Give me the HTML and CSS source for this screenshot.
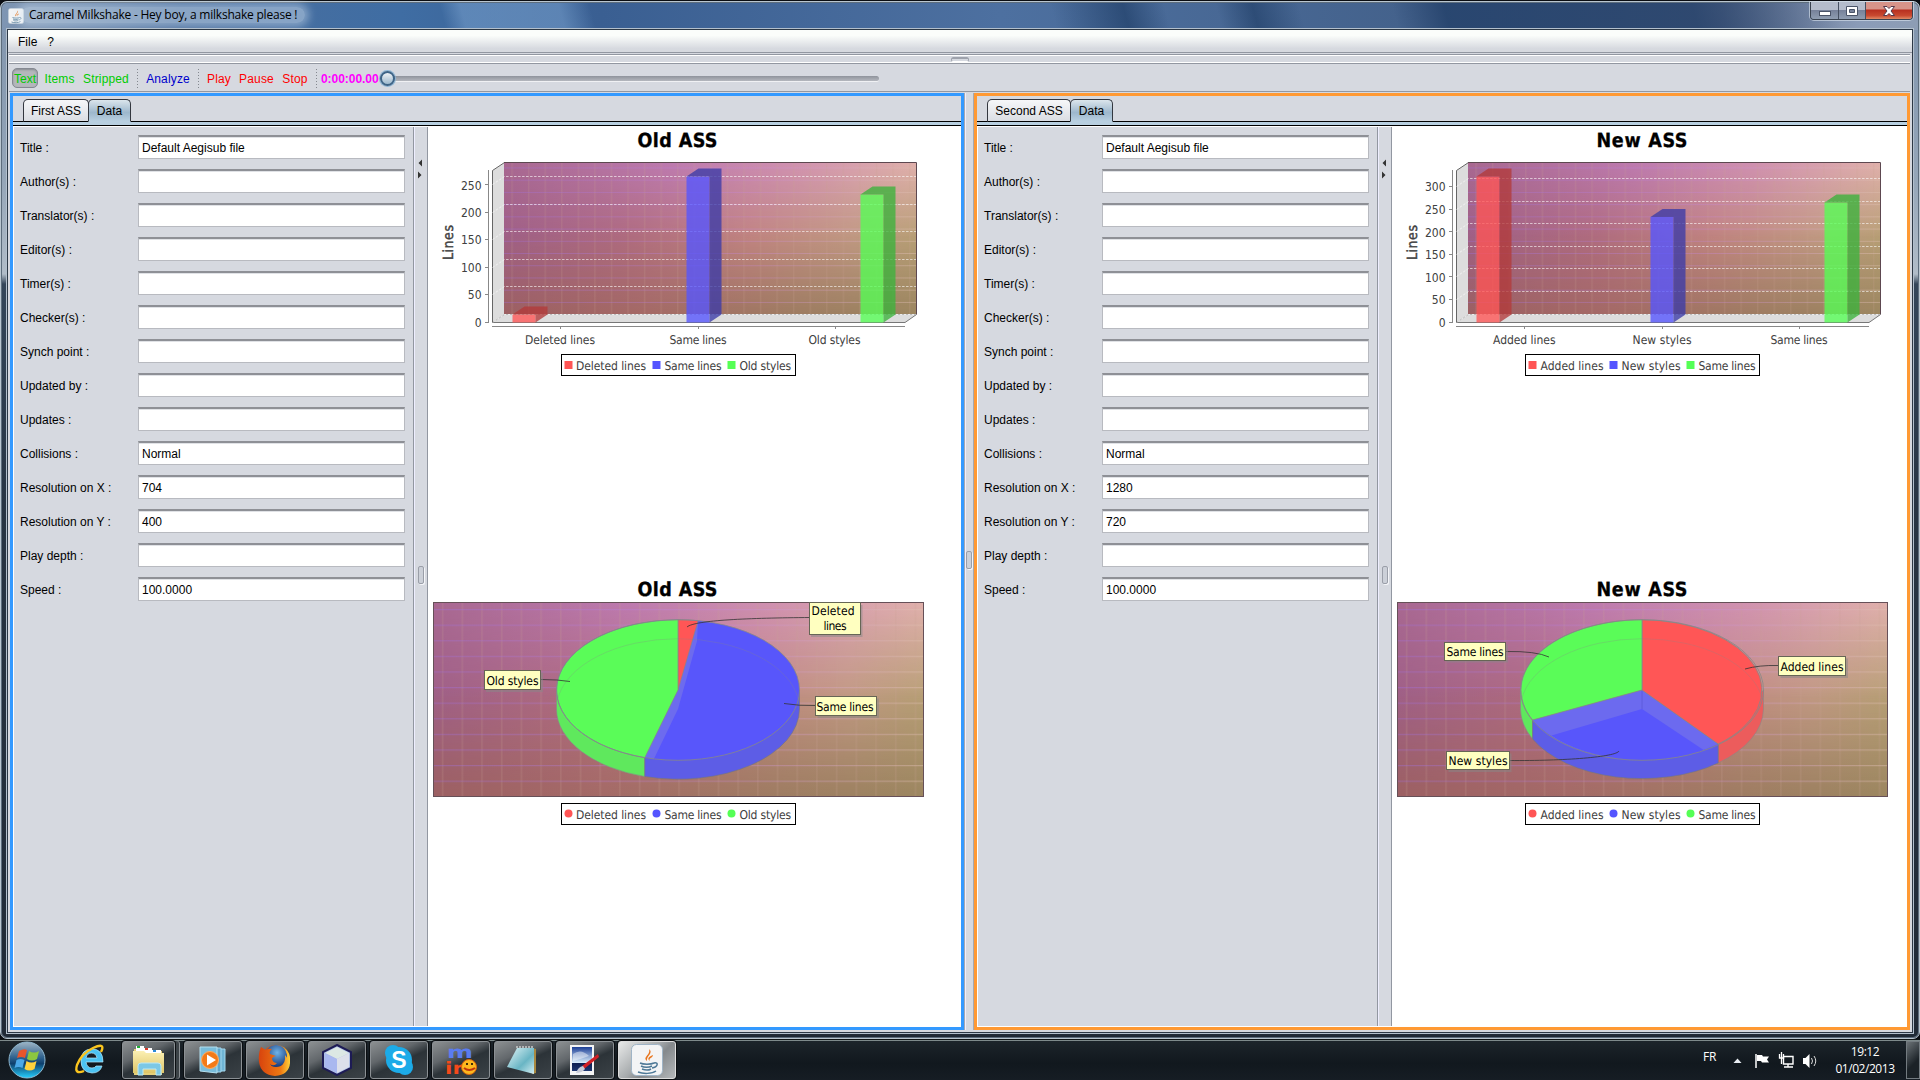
FILE: index.html
```html
<!DOCTYPE html>
<html lang="en">
<head>
<meta charset="utf-8">
<title>Caramel Milkshake - Hey boy, a milkshake please !</title>
<link rel="stylesheet" href="styles.css">
</head>
<body>
<svg class="defs" width="0" height="0">
  <defs>
    <linearGradient id="gTop"><stop offset="0" stop-color="#a86890"/><stop offset=".4" stop-color="#bd7aaf"/><stop offset=".7" stop-color="#d091b0"/><stop offset="1" stop-color="#e0b0ac"/></linearGradient>
    <linearGradient id="gMid"><stop offset="0" stop-color="#a06088"/><stop offset=".3" stop-color="#b06c80"/><stop offset=".6" stop-color="#c28582"/><stop offset=".85" stop-color="#c29a84"/><stop offset="1" stop-color="#b8a076"/></linearGradient>
    <linearGradient id="gBot"><stop offset="0" stop-color="#9c6062"/><stop offset=".35" stop-color="#a46a66"/><stop offset=".7" stop-color="#9e7c62"/><stop offset="1" stop-color="#9c8660"/></linearGradient>
    <linearGradient id="fTop" x2="0" y2="1"><stop offset="0" stop-color="#fff"/><stop offset=".5" stop-color="#000"/></linearGradient>
    <linearGradient id="fBot" x2="0" y2="1"><stop offset=".45" stop-color="#000"/><stop offset="1" stop-color="#fff"/></linearGradient>
    <linearGradient id="gH"><stop offset="0" stop-color="#a070dc" stop-opacity=".38"/><stop offset=".6" stop-color="#c88adc" stop-opacity=".35"/><stop offset="1" stop-color="#e0c0b0" stop-opacity=".45"/></linearGradient>
    <mask id="mTop"><rect width="490" height="194" fill="url(#fTop)"/></mask>
    <mask id="mBot"><rect width="490" height="194" fill="url(#fBot)"/></mask>
    <pattern id="pV" width="19.7" height="194" patternUnits="userSpaceOnUse" x="8.8"><rect width="1.6" height="194" fill="#c8a090" opacity=".2"/></pattern>
    <pattern id="pH" width="490" height="15.6" patternUnits="userSpaceOnUse" y="7"><rect width="490" height="1.2" fill="url(#gH)"/></pattern>
    <symbol id="wall" viewBox="0 0 490 194" preserveAspectRatio="none">
      <rect width="490" height="194" fill="url(#gMid)"/>
      <rect width="490" height="194" fill="url(#gTop)" mask="url(#mTop)"/>
      <rect width="490" height="194" fill="url(#gBot)" mask="url(#mBot)"/>
      <rect width="490" height="194" fill="url(#pV)"/>
      <rect width="490" height="194" fill="url(#pH)"/>
    </symbol>
    <g id="box3d">
      <path d="M492.5 170.5L504.5 162.5V314.5L492.5 322.5Z" fill="#ddd"/>
      <path d="M492.5 322.5L504.5 314.5H916.5L905 322.5Z" fill="#ddd"/>
      <use href="#wall" x="504" y="162" width="412" height="152"/>
      <path d="M492.5 322.5V170.5L504.5 162.5" fill="none" stroke="#666"/>
      <path d="M504 162.5H916.5V314.5" fill="none" stroke="#5d4850"/>
      <path d="M916.5 314.5L905 322.5H492" fill="none" stroke="#777"/>
      <path d="M492.5 322.5L504.5 314.5H916" fill="none" stroke="#bbb" stroke-dasharray="2 2"/>
      <path d="M488.5 170V323M492 326.5H905M560.5 327V329M698.5 327V329M835.5 327V329" fill="none" stroke="#888"/>
    </g>
    <g id="java">
      <rect x=".5" y=".5" width="31" height="31" rx="5" fill="#f3f4f5" stroke="#9fb4c6"/>
      <path d="M16 17c-5-4 4-6 2-12 5 4-3 7-2 12M19 17c-2-3 3-3 3-6-5 2-6 4-3 6" fill="#e8761f"/>
      <path d="M9 19c3 1.5 11 1.500 14 0M10 22c3 1.500 8 1.500 11 0M11 25c3 1.200 7 1.200 9 0M7 28c5 2 14 2 18-1M23 19c5-1 4 4-2 5" fill="none" stroke="#4d7896" stroke-width="1.500"/>
    </g>
    <g id="arrows"><path d="M422 159.500V166.500L418.500 163ZM418 171.500V178.500L421.500 175Z" fill="#333"/></g>
    <linearGradient id="orb" x2="0" y2="1"><stop offset="0" stop-color="#9eb4c4"/><stop offset=".45" stop-color="#2b5f8c"/><stop offset=".6" stop-color="#0d3f6d"/><stop offset="1" stop-color="#25d0ff"/></linearGradient>
    <linearGradient id="fold" x2="0" y2="1"><stop offset="0" stop-color="#fbf0b4"/><stop offset="1" stop-color="#dfc567"/></linearGradient>
    <linearGradient id="sky" x2="0" y2="1"><stop offset="0" stop-color="#1c3f96"/><stop offset=".65" stop-color="#d8ecfa"/><stop offset=".66" stop-color="#0d1e50"/><stop offset="1" stop-color="#1d3670"/></linearGradient>
    <linearGradient id="pad" x2="1" y2="1"><stop offset="0" stop-color="#e4f6f8"/><stop offset=".6" stop-color="#69b5c4"/><stop offset="1" stop-color="#d4eef2"/></linearGradient>
    <radialGradient id="fox" cx=".55" cy=".35" r=".7"><stop offset="0" stop-color="#6fb4e8"/><stop offset="1" stop-color="#102d70"/></radialGradient>
    <linearGradient id="flame"><stop offset="0" stop-color="#d8430e"/><stop offset=".7" stop-color="#ee7a12"/><stop offset="1" stop-color="#ffd23c"/></linearGradient>
  </defs>
</svg>

<div class="screen">
  <main class="window">
    <header class="titlebar">
      <svg class="app-icon" viewBox="0 0 32 32"><use href="#java"/></svg>
      <span class="caption">Caramel Milkshake - Hey boy, a milkshake please !</span>
      <div class="controls">
        <span class="ctl"><svg width="14" height="14"><rect x="1.500" y="7.500" width="11" height="4" fill="#fff" stroke="#4a5468"/></svg></span>
        <span class="ctl mid"><svg width="14" height="14"><path d="M1.500 2.500h11v9h-11zM4.500 5.500v3h5v-3z" fill="#fff" fill-rule="evenodd" stroke="#4a5468"/></svg></span>
        <span class="ctl close"><svg width="14" height="14"><path d="M1.500 2.500h3.500l2 2 2-2h3.500l-3.500 4.500 3.500 4.500h-3.500l-2-2-2 2h-3.500l3.500-4.500z" fill="#fff" stroke="#54384a"/></svg></span>
      </div>
    </header>
    <section class="client">
      <nav class="menubar"><span>File</span><span>?</span></nav>
      <div class="strip"><i></i></div>
      <div class="toolbar">
        <span class="tool on green" style="width:26px">Text</span>
        <span class="tool green" style="width:43px">Items</span>
        <span class="tool green" style="width:50px">Stripped</span>
        <i class="sep"></i>
        <span class="tool navy" style="width:60px">Analyze</span>
        <i class="sep"></i>
        <span class="tool red" style="width:40px">Play</span>
        <span class="tool red" style="width:35px">Pause</span>
        <span class="tool red" style="width:42px">Stop</span>
        <i class="sep"></i>
        <span class="time">0:00:00.00</span>
        <div class="slider"><i></i></div>
      </div>
      <div class="workspace">
        <article class="panel first">
          <div class="tabs"><span class="tab" style="width:66px">First ASS</span><span class="tab active" style="width:43px">Data</span></div>
          <div class="content">
            <form class="fields">
              <label>Title :<b>Default Aegisub file</b></label>
              <label>Author(s) :<b></b></label>
              <label>Translator(s) :<b></b></label>
              <label>Editor(s) :<b></b></label>
              <label>Timer(s) :<b></b></label>
              <label>Checker(s) :<b></b></label>
              <label>Synch point :<b></b></label>
              <label>Updated by :<b></b></label>
              <label>Updates :<b></b></label>
              <label>Collisions :<b>Normal</b></label>
              <label>Resolution on X :<b>704</b></label>
              <label>Resolution on Y :<b>400</b></label>
              <label>Play depth :<b></b></label>
              <label>Speed :<b>100.0000</b></label>
            </form>
            <div class="divider"><svg width="13" height="60" viewBox="414 127 13 60"><use href="#arrows"/></svg><i class="grip"></i></div>
            <svg class="charts" width="533" height="899" viewBox="428 127 533 899">
              <text class="title" x="637.500" y="147" textLength="80">Old ASS</text>
              <use href="#box3d"/>
              <path class="gridline" d="M492.500 184.500L504.500 176.500H916M492.500 212.500L504.500 204.500H916M492.500 239.500L504.500 231.500H916M492.500 267.500L504.500 259.500H916M492.500 294.500L504.500 286.500H916"/>
              <path class="axis" d="M485 184.500h3M485 212.500h3M485 239.500h3M485 267.500h3M485 294.500h3M485 322.500h3"/>
              <g class="tick"><text x="481.500" y="190">250</text><text x="481.500" y="217">200</text><text x="481.500" y="244">150</text><text x="481.500" y="272">100</text><text x="481.500" y="299">50</text><text x="481.500" y="327">0</text></g>
              <text class="ylabel" transform="translate(453 260) rotate(-90)" textLength="35">Lines</text>
              <g class="bar r"><rect x="512.500" y="314.500" width="23" height="8"/><path d="M512.500 314.500l12-8h23l-12 8zM535.500 314.500l12-8v8l-12 8z"/></g>
              <g class="bar b"><rect x="686.500" y="176.500" width="23" height="146"/><path d="M686.500 176.500l12-8h23l-12 8zM709.500 176.500l12-8v146l-12 8z"/></g>
              <g class="bar g"><rect x="860.500" y="194.500" width="23" height="128"/><path d="M860.500 194.500l12-8h23l-12 8zM883.500 194.500l12-8v128l-12 8z"/></g>
              <g class="txt"><text x="525" y="344" textLength="70">Deleted lines</text><text x="669.500" y="344" textLength="57">Same lines</text><text x="808.500" y="344" textLength="52">Old styles</text></g>
              <g class="txt">
                <rect class="frame" x="561.500" y="354.500" width="234" height="21"/>
                <rect class="fr" x="564.500" y="361" width="8" height="8"/><text x="576" y="370" textLength="70">Deleted lines</text>
                <rect class="fb" x="652.500" y="361" width="8" height="8"/><text x="664.500" y="370" textLength="57">Same lines</text>
                <rect class="fg" x="727.500" y="361" width="8" height="8"/><text x="739.500" y="370" textLength="51.500">Old styles</text>
              </g>

              <text class="title" x="637.500" y="596" textLength="80">Old ASS</text>
              <use href="#wall" x="433" y="602" width="490" height="194"/>
              <rect class="plot" x="433.500" y="602.500" width="490" height="194"/>
              <path d="M556.500 690V709A121.500 70.300 0 0 0 644.800 776.500V757Z" fill="#5fe85d" stroke="#888" stroke-width=".6"/>
              <path d="M799.500 690V709A121.500 70.300 0 0 1 644.800 776.500V757Z" fill="#5d5de6" stroke="#777" stroke-width=".6"/>
              <ellipse cx="678" cy="690" rx="121.500" ry="70.300" fill="#5856fb"/>
              <path d="M698.100 620.700L678 690L644.800 757.300L654 758.800L678 709L697 641Z" fill="#6d6bee"/>
              <path d="M678 690V619.700A121.500 70.300 0 0 1 698.100 620.700Z" fill="#ff5656" stroke="#888" stroke-width=".7"/>
              <path d="M678 690V619.700A121.500 70.300 0 0 0 644.800 757.600Z" fill="#5afc58" stroke="#888" stroke-width=".7"/>
              <ellipse cx="678" cy="690" rx="121.500" ry="70.300" fill="none" stroke="#888" stroke-width=".8"/>
              <path d="M557.500 700A121.500 70.300 0 0 1 798.500 700" fill="none" stroke="#888" stroke-width=".6" opacity=".45"/>
              <path class="link" d="M810 617.500C750 618 695 620 687 627M541 679.500Q558 679.500 570 681.500M815 705.500Q800 706 784 703.500"/>
              <g class="tag"><path class="shade" d="M811 605h51.500v32h-51.500zM486 672.500h57v19.500h-57zM817.500 698.500h61.500v19.500h-61.500z"/><rect x="809.500" y="602.500" width="51" height="32"/><rect x="484.500" y="670.500" width="56" height="19"/><rect x="815.500" y="696.500" width="61" height="19"/>
              <text x="811.500" y="615" textLength="43">Deleted</text><text x="823.500" y="630" textLength="23">lines</text><text x="486.500" y="685" textLength="52">Old styles</text><text x="816.500" y="711" textLength="57">Same lines</text></g>
              <g class="txt">
                <rect class="frame" x="561.500" y="803.500" width="234" height="21"/>
                <circle class="fr" cx="568.500" cy="813.500" r="4"/><text x="576" y="819" textLength="70">Deleted lines</text>
                <circle class="fb" cx="656.500" cy="813.500" r="4"/><text x="664.500" y="819" textLength="57">Same lines</text>
                <circle class="fg" cx="731.500" cy="813.500" r="4"/><text x="739.500" y="819" textLength="51.500">Old styles</text>
              </g>
            </svg>
          </div>
        </article>
        <div class="splitter"><i class="grip"></i></div>
        <article class="panel second">
          <div class="tabs"><span class="tab" style="width:84px">Second ASS</span><span class="tab active" style="width:43px">Data</span></div>
          <div class="content">
            <form class="fields">
              <label>Title :<b>Default Aegisub file</b></label>
              <label>Author(s) :<b></b></label>
              <label>Translator(s) :<b></b></label>
              <label>Editor(s) :<b></b></label>
              <label>Timer(s) :<b></b></label>
              <label>Checker(s) :<b></b></label>
              <label>Synch point :<b></b></label>
              <label>Updated by :<b></b></label>
              <label>Updates :<b></b></label>
              <label>Collisions :<b>Normal</b></label>
              <label>Resolution on X :<b>1280</b></label>
              <label>Resolution on Y :<b>720</b></label>
              <label>Play depth :<b></b></label>
              <label>Speed :<b>100.0000</b></label>
            </form>
            <div class="divider"><svg width="13" height="60" viewBox="414 127 13 60"><use href="#arrows"/></svg><i class="grip"></i></div>
            <svg class="charts" width="515" height="899" viewBox="428 127 515 899">
              <text class="title" x="632.500" y="147" textLength="91">New ASS</text>
              <use href="#box3d"/>
              <path class="gridline" d="M492.500 186.500L504.500 178.500H916M492.500 209.500L504.500 201.500H916M492.500 231.500L504.500 223.500H916M492.500 254.500L504.500 246.500H916M492.500 276.500L504.500 268.500H916M492.500 299.500L504.500 291.500H916"/>
              <path class="axis" d="M485 186.500h3M485 209.500h3M485 231.500h3M485 254.500h3M485 276.500h3M485 299.500h3M485 322.500h3"/>
              <g class="tick"><text x="481.500" y="191">300</text><text x="481.500" y="214">250</text><text x="481.500" y="237">200</text><text x="481.500" y="259">150</text><text x="481.500" y="282">100</text><text x="481.500" y="304">50</text><text x="481.500" y="327">0</text></g>
              <text class="ylabel" transform="translate(453 260) rotate(-90)" textLength="35">Lines</text>
              <g class="bar r"><rect x="512.500" y="176.500" width="23" height="146"/><path d="M512.500 176.500l12-8h23l-12 8zM535.500 176.500l12-8v146l-12 8z"/></g>
              <g class="bar b"><rect x="686.500" y="217" width="23" height="105.500"/><path d="M686.500 217l12-8h23l-12 8zM709.500 217l12-8v105.500l-12 8z"/></g>
              <g class="bar g"><rect x="860.500" y="202.500" width="23" height="120"/><path d="M860.500 202.500l12-8h23l-12 8zM883.500 202.500l12-8v120l-12 8z"/></g>
              <g class="txt"><text x="529" y="344" textLength="62.500">Added lines</text><text x="668.500" y="344" textLength="59">New styles</text><text x="806.500" y="344" textLength="57">Same lines</text></g>
              <g class="txt">
                <rect class="frame" x="561.500" y="354.500" width="234" height="21"/>
                <rect class="fr" x="564.500" y="361" width="8" height="8"/><text x="576.500" y="370" textLength="63">Added lines</text>
                <rect class="fb" x="645.500" y="361" width="8" height="8"/><text x="657.500" y="370" textLength="59">New styles</text>
                <rect class="fg" x="722.500" y="361" width="8" height="8"/><text x="734.500" y="370" textLength="57">Same lines</text>
              </g>

              <text class="title" x="632.500" y="596" textLength="91">New ASS</text>
              <use href="#wall" x="433" y="602" width="490" height="194"/>
              <rect class="plot" x="433.500" y="602.500" width="490" height="194"/>
              <path d="M556.500 690V709A121.500 70.300 0 0 0 568.600 739V719Z" fill="#5fe85d" stroke="#888" stroke-width=".6"/>
              <path d="M799.500 690V709A121.500 70.300 0 0 1 754.200 763V744Z" fill="#ec5c5c" stroke="#888" stroke-width=".6"/>
              <path d="M568.600 720L678 690L754.200 744V763A121.500 70.300 0 0 1 568.600 739Z" fill="#5d5de6" stroke="#777" stroke-width=".6"/>
              <path d="M568.600 720L678 690L754.200 744A121.500 70.300 0 0 1 568.600 720Z" fill="#6c6aef"/>
              <path d="M678 709L740.400 750.500A121.500 70.300 0 0 1 587.500 735.500Z" fill="#5856fb"/>
              <path d="M678 690V709" stroke="#5a58d8" stroke-width=".8"/>
              <path d="M678 690V619.700A121.500 70.300 0 0 1 754.200 744Z" fill="#ff5656" stroke="#888" stroke-width=".8"/>
              <path d="M678 690V619.700A121.500 70.300 0 0 0 568.600 720Z" fill="#5afc58" stroke="#888" stroke-width=".8"/>
              <ellipse cx="678" cy="690" rx="121.500" ry="70.300" fill="none" stroke="#888" stroke-width=".8"/>
              <path d="M557.500 700A121.500 70.300 0 0 1 798.500 700" fill="none" stroke="#888" stroke-width=".6" opacity=".45"/>
              <path class="link" d="M542 651.500Q572 651 585 657M814 665.500Q795 665 781 669M545 760.500C600 761 652 757 655 751"/>
              <g class="tag"><path class="shade" d="M482.500 644.500h61.500v18h-61.500zM816.500 658.500h67.500v19.500h-67.500zM484.500 753.500h63v18.500h-63z"/><rect x="480.500" y="642.500" width="61" height="18"/><rect x="814.500" y="656.500" width="67" height="19"/><rect x="482.500" y="751.500" width="63" height="18"/>
              <text x="482.500" y="656" textLength="57">Same lines</text><text x="816.500" y="671" textLength="63">Added lines</text><text x="484.500" y="765" textLength="59">New styles</text></g>
              <g class="txt">
                <rect class="frame" x="561.500" y="803.500" width="234" height="21"/>
                <circle class="fr" cx="568.500" cy="813.500" r="4"/><text x="576.500" y="819" textLength="63">Added lines</text>
                <circle class="fb" cx="649.500" cy="813.500" r="4"/><text x="657.500" y="819" textLength="59">New styles</text>
                <circle class="fg" cx="726.500" cy="813.500" r="4"/><text x="734.500" y="819" textLength="57">Same lines</text>
              </g>
            </svg>
          </div>
        </article>
      </div>
    </section>
  </main>

  <footer class="taskbar">
    <svg class="orb" width="38" height="38"><circle cx="19" cy="19" r="18" fill="url(#orb)" stroke="#8db7cf"/><path d="M11 10q5-3 8-1l-2 8q-4-2-8 0z" fill="#e8552b"/><path d="M21 10q5 3 10 0l-2 8q-5 3-10 0z" fill="#8cc63f"/><path d="M8.500 19q4-2 8 0l-2 8q-4-2-8 0z" fill="#4aa8e8"/><path d="M18.500 20q5 3 10 0l-2 8q-5 3-10 0z" fill="#ffd23c"/></svg>
    <svg class="ie" width="32" height="32"><path d="M29 19H12q1 6 6 6 3 0 4-2h6q-2 7-10 7-11-1-11-12Q7 6 18 6q11 0 11 13M12 15h11q-1-5-5.500-5t-5.500 5" fill="#4cc3f2" stroke="#b5eaff" stroke-width=".7"/><path d="M27 9Q32-1 19 5 7 11 3 22q-3 10 7 6" fill="none" stroke="#fbc51e" stroke-width="2.400"/></svg>
    <span class="task stacked" style="width:53px"><svg width="34" height="32"><path d="M2 5h8l2 2h18V31H2z" fill="#e5cf79"/><path d="M4 2h8v6H4zM12 4h8v5h-8zM20 6h9v4h-9z" fill="#fff"/><path d="M5 2h3v2H5z" fill="#1fae35"/><path d="M13 4h3v2h-3z" fill="#d8382a"/><path d="M21 6h3v2h-3z" fill="#2b8ad8"/><path d="M1 7h11l2 2h18V29H1z" fill="url(#fold)"/><path d="M6 31V22q0-3 3-3h17q3 0 3 3v9h-5v-6H11v6z" fill="#7cc8e6" stroke="#bce8f5"/></svg></span>
    <span class="task"><svg width="34" height="32"><path d="M20 5h9v22h-9z" fill="#6fb4d4" stroke="#a4d8ee"/><path d="M17 4h8v24h-8z" fill="#5fa7cc" stroke="#a4d8ee"/><path d="M4 3h17v26L4 27z" fill="#79bddb" stroke="#b5e0f0"/><circle cx="14" cy="16" r="8.500" fill="#f27a18" stroke="#ffae62"/><path d="M11 10.500l9 5.500-9 5.500z" fill="#fff"/></svg></span>
    <span class="task"><svg width="34" height="32"><circle cx="18" cy="15" r="14" fill="url(#flame)"/><circle cx="18" cy="12" r="11" fill="url(#fox)"/><path d="M3 3q3 2 5 3 3-2 6-1-3 2-2 5l6 2q-4 1-4 3 1 4 5 4-3 4-7 1 4 6 10 3 6-4 5-12 2 2 3 5 0-6-3-10 6 5 5 13-1 12-15 13Q3 31 1 18 0 10 3 3" fill="url(#flame)"/></svg></span>
    <span class="task"><svg width="34" height="32"><path d="M17 1l14 7v16l-14 7-14-7V8z" fill="#aebfe4" stroke="#1d1b55" stroke-width="2"/><path d="M17 3l12 6-12 6L5 9z" fill="#dce8e4"/><path d="M5 9l12 6v14L5 23z" fill="#a9b8ef"/><path d="M29 9l-12 6v14l12-6z" fill="#dce0ea"/></svg></span>
    <span class="task"><svg width="34" height="32"><circle cx="17" cy="16" r="13" fill="#1cabe8"/><circle cx="11" cy="9" r="8" fill="#1cabe8"/><circle cx="23" cy="23" r="8" fill="#1cabe8"/><text x="17" y="24" text-anchor="middle" class="skype">S</text></svg></span>
    <span class="task"><svg class="mirc-logo" width="34" height="32"><text x="3" y="14" class="mirc m" textLength="26" lengthAdjust="spacingAndGlyphs">m</text><text x="1" y="30" class="mirc ir" textLength="18" lengthAdjust="spacingAndGlyphs">ir</text><circle cx="25" cy="23" r="7.500" fill="#fdb81e" stroke="#d8650c"/><path d="M20 24q5 4 11 0" stroke="#c0340c" stroke-width="2" fill="none"/><circle cx="23" cy="20" r="1"/><circle cx="28" cy="20" r="1"/></svg></span>
    <span class="task"><svg width="34" height="32"><path d="M26 4l4 1v24l-4 1z" fill="#a8883f"/><path d="M11 4h17v26L1 23z" fill="url(#pad)"/><path d="M11 4v-2M14 4v-2M17 4v-2M20 4v-2M23 4v-2M26 4v-2" stroke="#ccc" stroke-width="1.500"/></svg></span>
    <span class="task"><svg width="34" height="32"><path d="M2 1h24v30H2z" fill="#f4f4f4"/><path d="M4 3h20v24H4z" fill="url(#sky)"/><path d="M5 10q8-6 16 2-8 3-16 5z" fill="#fff" opacity=".45"/><path d="M30 10L14 22l2 3 15-12z" fill="#d11f24"/><path d="M15 22q-5 1-7 7 6 0 9-4z" fill="#c7cbd8"/></svg></span>
    <span class="task current"><svg width="32" height="32"><use href="#java"/></svg></span>
    <div class="tray">
      <span class="lang">FR</span>
      <svg width="90" height="20" viewBox="1730 1051 90 20"><path d="M1733.500 1063L1737.500 1058.500L1741.500 1063Z" fill="#e8edf2"/><path d="M1756 1054v14" stroke="#fff" stroke-width="1.500"/><path d="M1757 1055h5l1 1.500h6l-2 3 2 3h-7l-1-1.500h-4z" fill="#fff"/><path d="M1783.500 1056.500h9.500v7.500h-9.500zM1788 1064v3M1784 1067h9" fill="none" stroke="#fff" stroke-width="1.400"/><path d="M1779.500 1054v4h4v-4M1781.500 1052v12" stroke="#fff" stroke-width="1.300" fill="none"/><path d="M1803 1058h2.500l4-4v14l-4-4h-2.500z" fill="#fff"/><path d="M1811.500 1058q2 3 0 6M1814 1056q3.500 5 0 10" stroke="#ddd" fill="none"/></svg>
      <div class="clock"><span>19:12</span><span>01/02/2013</span></div>
      <i class="peek"></i>
    </div>
  </footer>
</div>
</body>
</html>
```
FILE: styles.css
```css
* { box-sizing: border-box; }
body { margin: 0; background: #0a0d12; font: 12px/14px "Liberation Sans", Arial, sans-serif; color: #000; }
i { font-style: normal; display: block; }
b { font-weight: normal; }
.defs { position: absolute; }
.screen { width: 1920px; height: 1080px; display: flex; flex-direction: column; overflow: hidden; padding-top: 1px; }

.window {
  height: 1038px; flex: none; border-radius: 7px; border: 1px solid #b9c6d0;
  box-shadow: inset 0 0 0 1px #5d6d7d;
  padding: 0 6px 5px 6px; display: flex; flex-direction: column;
  background:
    linear-gradient(75deg, transparent 0 1020px, rgba(20,50,90,.55) 1090px, transparent 1130px 1180px, rgba(20,50,90,.5) 1215px, transparent 1260px 1350px, rgba(28,58,100,.7) 1400px 1640px, transparent 1780px) 0 0 / 100% 28px no-repeat,
    linear-gradient(75deg, transparent 0 430px, rgba(120,160,205,.55) 450px 545px, transparent 575px) 0 0 / 100% 28px no-repeat,
    linear-gradient(90deg, #7f96b3 0, #4b6f9e 180px, #3f6da3 400px, #3a5f92 600px, #4d70a0 1000px, #44628c 1400px, #5c6c8c 1720px, #8b9cb8 1860px, #8d9db4) 0 0 / 100% 28px no-repeat,
    linear-gradient(180deg, #8296ae 29px, #95a6b8 180px, #b0bcc8 272px, #34465a 282px, #283544 500px, #202a36 1030px);
}
.titlebar { height: 27px; flex: none; display: flex; align-items: flex-start; padding-left: 1px; }
.app-icon { width: 16px; height: 16px; margin: 6px 5px 0 0; }
.caption { font: 12px/16px "Open Sans", "Noto Sans", sans-serif; margin-top: 5px; white-space: nowrap; letter-spacing: -.22px; padding: 0 8px; margin-left: -8px; background: rgba(215,230,245,.45); border-radius: 9px; box-shadow: 0 0 8px 4px rgba(215,230,245,.45); }
.controls { margin-left: auto; display: flex; height: 18px; width: 103px; border: 1px solid #39424f; border-top: 0; border-radius: 0 0 4px 4px; box-shadow: 0 0 0 1px rgba(220,230,240,.6); overflow: hidden; }
.ctl { width: 28px; display: flex; justify-content: center; align-items: center; border-right: 1px solid #465061; background: linear-gradient(#b4bccb 0 45%, #77829a 50%, #8f9db1); }
.ctl.mid { width: 27px; }
.ctl.close { flex: 1; border: 0; background: linear-gradient(#d79489 0 40%, #b83020 48%, #c94a30 80%, #e08a66); }

.client { flex: 1; border: 1px solid #2c3845; box-shadow: 0 0 0 1px #b3c0cd; background: #d6d9e0; display: flex; flex-direction: column; min-height: 0; }
.menubar { height: 23px; flex: none; background: linear-gradient(#fbfdfb 25%, #d6d9df 85%); border-bottom: 1px solid #9297a1; padding: 5px 10px; display: flex; gap: 10px; }
.strip { height: 10px; flex: none; margin: 1px 2px 0 1px; border: solid #9297a1; border-width: 1px 0; box-shadow: inset 0 1px #fff, inset 0 -1px #fff; }
.strip i { width: 18px; height: 5px; margin: 2px auto 0; border: 1px solid #9ea2ac; border-top-width: 2px; border-bottom-color: #fff; border-radius: 3px; }
.toolbar { height: 28px; flex: none; margin: 0 2px 0 1px; border-bottom: 1px solid #9297a1; display: flex; align-items: center; padding: 1px 0 0 3px; }
.tool { height: 20px; line-height: 22px; text-align: center; white-space: nowrap; letter-spacing: .15px; }
.tool.on { border: 1px solid #858992; border-radius: 5px; background: #b4b7bc; box-shadow: inset 0 1px 2px #888b92; line-height: 20px; letter-spacing: 0; }
.green { color: #0c0; } .navy { color: #00c; } .red { color: #f00; }
.tool.green:nth-child(3) { margin-right: 6px; }
.sep { width: 1px; height: 19px; background: repeating-linear-gradient(#84888f 0 1px, transparent 1px 3px); }
.time { color: #f0f; font-weight: bold; width: 57px; margin-left: 4px; letter-spacing: -.05px; line-height: 20px; height: 19px; }
.slider { width: 499px; height: 5px; border-radius: 3px; background: linear-gradient(#8f939c, #b4b7be); box-shadow: 0 1px #f0f1f4; margin: 0 0 0 2px; display: flex; align-items: center; }
.slider i { width: 15px; height: 15px; flex: none; border-radius: 50%; border: 2px solid #3d6487; background: linear-gradient(#f0f3f6, #9cb8cd); box-shadow: 0 0 0 1px #8db5d5; }

.workspace { flex: 1; display: flex; padding: 1px 1px 0 1px; min-height: 0; }
.panel { display: flex; flex-direction: column; border: 3px solid; height: 937px; }
.first { width: 954px; border-color: #39f; margin-left: 1px; }
.second { width: 936px; border-color: #f93; }
.splitter { width: 10px; height: 937px; padding-bottom: 4px; border: solid #a4a8b2; border-width: 0 1px; box-shadow: inset 1px 0 #eef; display: flex; align-items: center; justify-content: center; }
.grip { width: 6px; height: 18px; border: 1px solid #9a9ea8; border-radius: 2px; background: #ccd0d8; box-shadow: 1px 1px #f4f5f8; }
.tabs { height: 26px; flex: none; display: flex; align-items: flex-end; padding: 0 0 0 10px; border-bottom: 1px solid #000; box-shadow: 0 3px #b8cfe0, 0 4px #000; position: relative; z-index: 1; }
.tab { height: 23px; margin-bottom: -1px; border: 1px solid #33373f; border-bottom-color: #000; border-radius: 5px 5px 0 0; text-align: center; line-height: 22px; background: linear-gradient(#f6f7f9, #dadde3); white-space: nowrap; }
.tab + .tab { margin-left: -1px; }
.tab.active { background: linear-gradient(#dbe5ec, #9db7cc 60%, #b8cfe0); border-bottom-color: #b8cfe0; }
.content { flex: 1; margin-top: 4px; display: flex; border: solid #fff; border-width: 1px 0 1px 1px; overflow: hidden; }
.fields { width: 399px; flex: none; padding: 8px 8px 0 6px; display: flex; flex-direction: column; gap: 10px; }
.fields label { height: 24px; display: flex; justify-content: space-between; line-height: 26px; white-space: nowrap; }
.fields b { width: 267px; background: #fff; border: 1px solid #b8bac0; border-top: 2px solid #8e9096; padding-left: 3px; line-height: 22px; box-shadow: inset 0 1px #e0e2e6; }
.divider { width: 15px; flex: none; border: solid #9297a1; border-width: 0 1px; box-shadow: inset 1px 0 #eef; }
.divider svg { display: block; }
.divider .grip { margin: 379px auto 0; }
.charts { background: #fff; flex: 1 0 auto; display: block; }

.charts text { font-family: "DejaVu Sans Condensed", "DejaVu Sans", sans-serif; font-stretch: condensed; font-size: 12px; }
text[textLength] { text-rendering: geometricPrecision; }
.charts .title { font-weight: bold; font-size: 19.5px; stroke: #000; stroke-width: .3; }
.txt text, .tick text { fill: #404040; }
.tag text { fill: #000; }
.tick text { text-anchor: end; }
.charts .ylabel { font-size: 14px; fill: #404040; stroke: #404040; stroke-width: .4; }
.gridline { fill: none; stroke: #fff; stroke-opacity: .6; stroke-dasharray: 2.500 1.500; }
.axis { stroke: #888; }
.bar rect { fill-opacity: .78; }
.bar path { fill-opacity: .78; }
.r rect { fill: #ff5555; } .r path { fill: #b23a3a; }
.b rect { fill: #5555ff; } .b path { fill: #3b3ba8; }
.g rect { fill: #55ff55; } .g path { fill: #3bb23b; }
.frame { fill: #fff; stroke: #000; }
.fr { fill: #ff5555; } .fb { fill: #5555ff; } .fg { fill: #55ff55; }
.plot { fill: none; stroke: #665058; }
.link { fill: none; stroke: #333; stroke-width: .8; }
.tag rect { fill: #ffffc0; stroke: #665; }
.shade { fill: #888; opacity: .5; }

.taskbar { height: 41px; flex: none; padding-top: 2px; background: linear-gradient(#101516 0 1px, #7e8a8b 1px 2px, #1c242a 2px, #11181e 60%, #161d24); display: flex; align-items: flex-start; }
.orb { margin: 0 0 0 8px; }
.ie { margin: 2px 18px 0 28px; width: 32px; }
.task { width: 58px; height: 38px; flex: none; margin: 0 0 0 4px; border: 1px solid #8b9094; border-radius: 3px; background: linear-gradient(155deg, #8c9092 0, #62676b 35%, #2c3338 55%, #3b4247); box-shadow: 0 0 0 1px #0b0f12; display: flex; align-items: center; justify-content: center; }
.task.stacked { margin: 0 5px 0 -2px; box-shadow: 0 0 0 1px #0b0f12, 4px 0 0 0 #3c4347, 5px 0 0 0 #8b9094; }
.task.current { background: linear-gradient(135deg, #e8e9e9, #a7abad 45%, #85898c 60%, #b4b8ba); border-color: #ddd; }
.skype { font: bold 23px "Liberation Sans", Arial, sans-serif; fill: #fff; }
.mirc-logo { overflow: visible; }
.mirc { font: bold 17px "DejaVu Sans", sans-serif; }
.m { fill: #5a7cf0; }
.ir { fill: #f4491a; }
.tray { margin-left: auto; display: flex; align-items: flex-start; color: #fff; font: 12px/16px "Open Sans", "Noto Sans", sans-serif; }
.lang { margin: 8px 12px 0 0; width: 15px; letter-spacing: -.3px; }
.tray svg { margin-top: 10px; }
.clock { width: 84px; margin: 2px 0 0 2px; padding-left: 2px; display: flex; flex-direction: column; align-items: center; line-height: 17px; letter-spacing: -.45px; }
.peek { width: 14px; height: 38px; border: 1px solid #737b80; background: linear-gradient(135deg, #6b7276, #1b2227 60%); }
```
